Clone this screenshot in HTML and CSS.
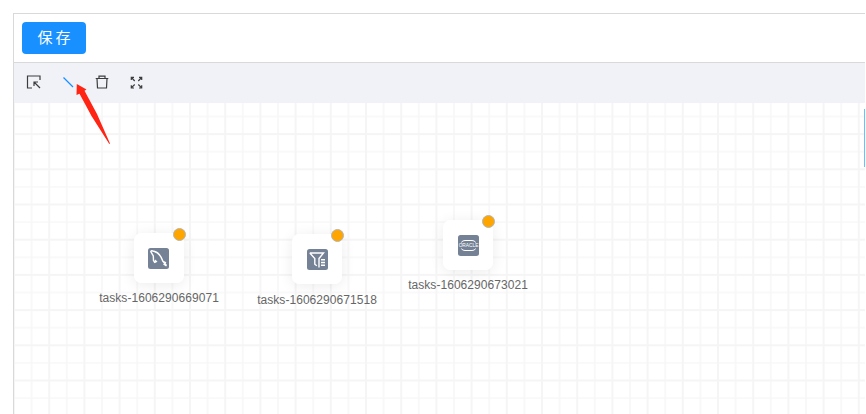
FILE: index.html
```html
<!DOCTYPE html>
<html lang="zh">
<head>
<meta charset="utf-8">
<title>Tasks</title>
<link rel="stylesheet" href="styles.css">
</head>
<body>
<main class="editor">
  <header class="header"><button class="save">保存</button></header>
  <nav class="toolbar">
    <svg class="tool" viewBox="0 0 16 16"><path d="M6 14H1.500V2H14V6M14 14L8.500 8.500M8 12V8H12"/></svg>
    <svg class="tool active" viewBox="0 0 16 16"><path d="M3.500 3.500L13 13"/></svg>
    <svg class="tool" viewBox="0 0 16 16"><path d="M1.700 4.500H14.300M5 4.500V2.200H11V4.500M3 4.500L3.500 14H12.500L13 4.500"/></svg>
    <svg class="tool" viewBox="0 0 16 16"><path d="M6.700 7L3.500 3.500M3.300 6V3.300H6M10.300 7L13.500 3.500M11 3.300H13.700V6M6.700 10.500L3.500 13.700M3.300 11.300V14H6M10.300 10.500L13.500 13.700M11 14H13.700V11.300"/></svg>
  </nav>
  <section class="canvas">
    <svg class="grid">
      <defs><pattern id="grid" width="35.2" height="35.2" patternUnits="userSpaceOnUse" x="8.8" y="4.7"><path class="minor" d="M8.800 0V35.200M0 8.800H35.200"/><path class="major" d="M26.400 0V35.200M0 26.400H35.200"/></pattern></defs>
      <rect width="100%" height="100%" fill="url(#grid)"/>
    </svg>
    <div class="node mysql">
      <div class="card"><i class="dot"></i>
        <svg class="icon" viewBox="0 0 21 21"><rect width="21" height="21" rx="2.500"/><path d="M7 14.800L5.500 12.500L5.300 8L2.800 3.500Q3 2 6 3.300C11 4.500 13.500 9 15 13.500L18.500 17.500M7 14.800L7.500 12.800L9 14M15 13.500L18 15M15.500 16L18.500 18"/></svg>
      </div>
      <span>tasks-1606290669071</span>
    </div>
    <div class="node filter">
      <div class="card"><i class="dot"></i>
        <svg class="icon" viewBox="0 0 21 21"><rect width="21" height="21" rx="2.500"/><path d="M2.800 4H16.500L12 9.500V18.500M2.800 4L7.800 9.500V15.200L9.800 16.700M14 10.700H18M14 13.500H18M14 16.300H18"/></svg>
      </div>
      <span>tasks-1606290671518</span>
    </div>
    <div class="node oracle">
      <div class="card"><i class="dot"></i>
        <svg class="icon" viewBox="0 0 21 21"><rect width="21" height="21" rx="2.500"/><path class="thin" d="M3.500 7.500Q4 5.500 7 5.500H14Q17 5.500 17.500 7.500M3.500 13.500Q4 15.500 7 15.500H14Q17 15.500 17.500 13.500"/><text x="10.500" y="12.200" text-anchor="middle">ORACLE</text></svg>
      </div>
      <span>tasks-1606290673021</span>
    </div>
    <div class="panel-edge"></div>
  </section>
  <svg class="arrow" viewBox="0 0 34 61"><path d="M0.800 0L10.500 5.500L8.500 6.800L21 30L34 59.500L33.300 60L15.500 32L3.500 9.800L0.500 11Z"/></svg>
</main>
</body>
</html>
```
FILE: styles.css
```css
* { box-sizing: border-box; }
body {
  margin: 0;
  padding: 13px 1px 0 13px;
  height: 414px;
  overflow: hidden;
  background: #fff;
  font-family: "Liberation Sans", "Noto Sans CJK SC", sans-serif;
}
.editor {
  height: 401px;
  display: flex;
  flex-direction: column;
  border-top: 1px solid #d9d9d9;
  border-left: 1px solid #d9d9d9;
}
.header {
  height: 49px;
  padding: 8px;
  border-bottom: 1px solid #d9d9d9;
}
.save {
  display: block;
  width: 64px;
  height: 32px;
  padding: 0 0 4px 3px;
  border: 0;
  border-radius: 4px;
  background: #1890ff;
  color: #fff;
  font: 15px "Noto Sans CJK SC", sans-serif;
  letter-spacing: 3px;
}
.toolbar {
  height: 40px;
  flex: none;
  display: flex;
  align-items: center;
  gap: 18px;
  padding: 0 0 2px 12px;
  background: #f0f2f7;
}
.tool {
  width: 16px;
  height: 16px;
  fill: none;
  stroke: #3c3c3c;
  stroke-width: 1.200;
}
.tool.active { stroke: #1890ff; }
.canvas {
  position: relative;
  flex: 1;
  overflow: hidden;
}
.grid {
  display: block;
  width: 100%;
  height: 100%;
}
.grid .minor { stroke: #f7f7f7; stroke-width: 1.700; }
.grid .major { stroke: #f5f5f5; stroke-width: 2; }
.node {
  position: absolute;
  width: 140px;
  display: flex;
  flex-direction: column;
  align-items: center;
  gap: 7px;
  color: #666;
  font-size: 12px;
  line-height: 16px;
  letter-spacing: 0.050px;
}
.mysql { left: 75px; top: 130px; }
.filter { left: 233px; top: 131px; }
.oracle { left: 384px; top: 117px; }
.card {
  position: relative;
  width: 50px;
  height: 50px;
  display: grid;
  place-items: center;
  border-radius: 7px;
  background: #fff;
  box-shadow: 0 2px 14px rgba(0, 0, 0, 0.080);
}
.filter .card { margin-bottom: 1px; }
.dot {
  position: absolute;
  top: -5px;
  right: -2px;
  width: 13px;
  height: 13px;
  border: 1px solid #b5b5b5;
  border-radius: 50%;
  background: #ffa500;
}
.icon {
  width: 21px;
  height: 21px;
  fill: #758296;
}
.mysql .icon { margin-right: 1px; }
.icon path { fill: none; stroke: #fff; stroke-width: 1.400; }
.icon .thin { stroke-width: 1; }
.icon text { fill: #fff; font-size: 4.800px; letter-spacing: 0; }
.panel-edge {
  position: absolute;
  top: 6px;
  right: 0;
  width: 1px;
  height: 58px;
  background: #69c0ff;
}
.arrow {
  position: absolute;
  left: 76px;
  top: 84px;
  width: 34px;
  height: 61px;
  fill: #ff2414;
}
```
